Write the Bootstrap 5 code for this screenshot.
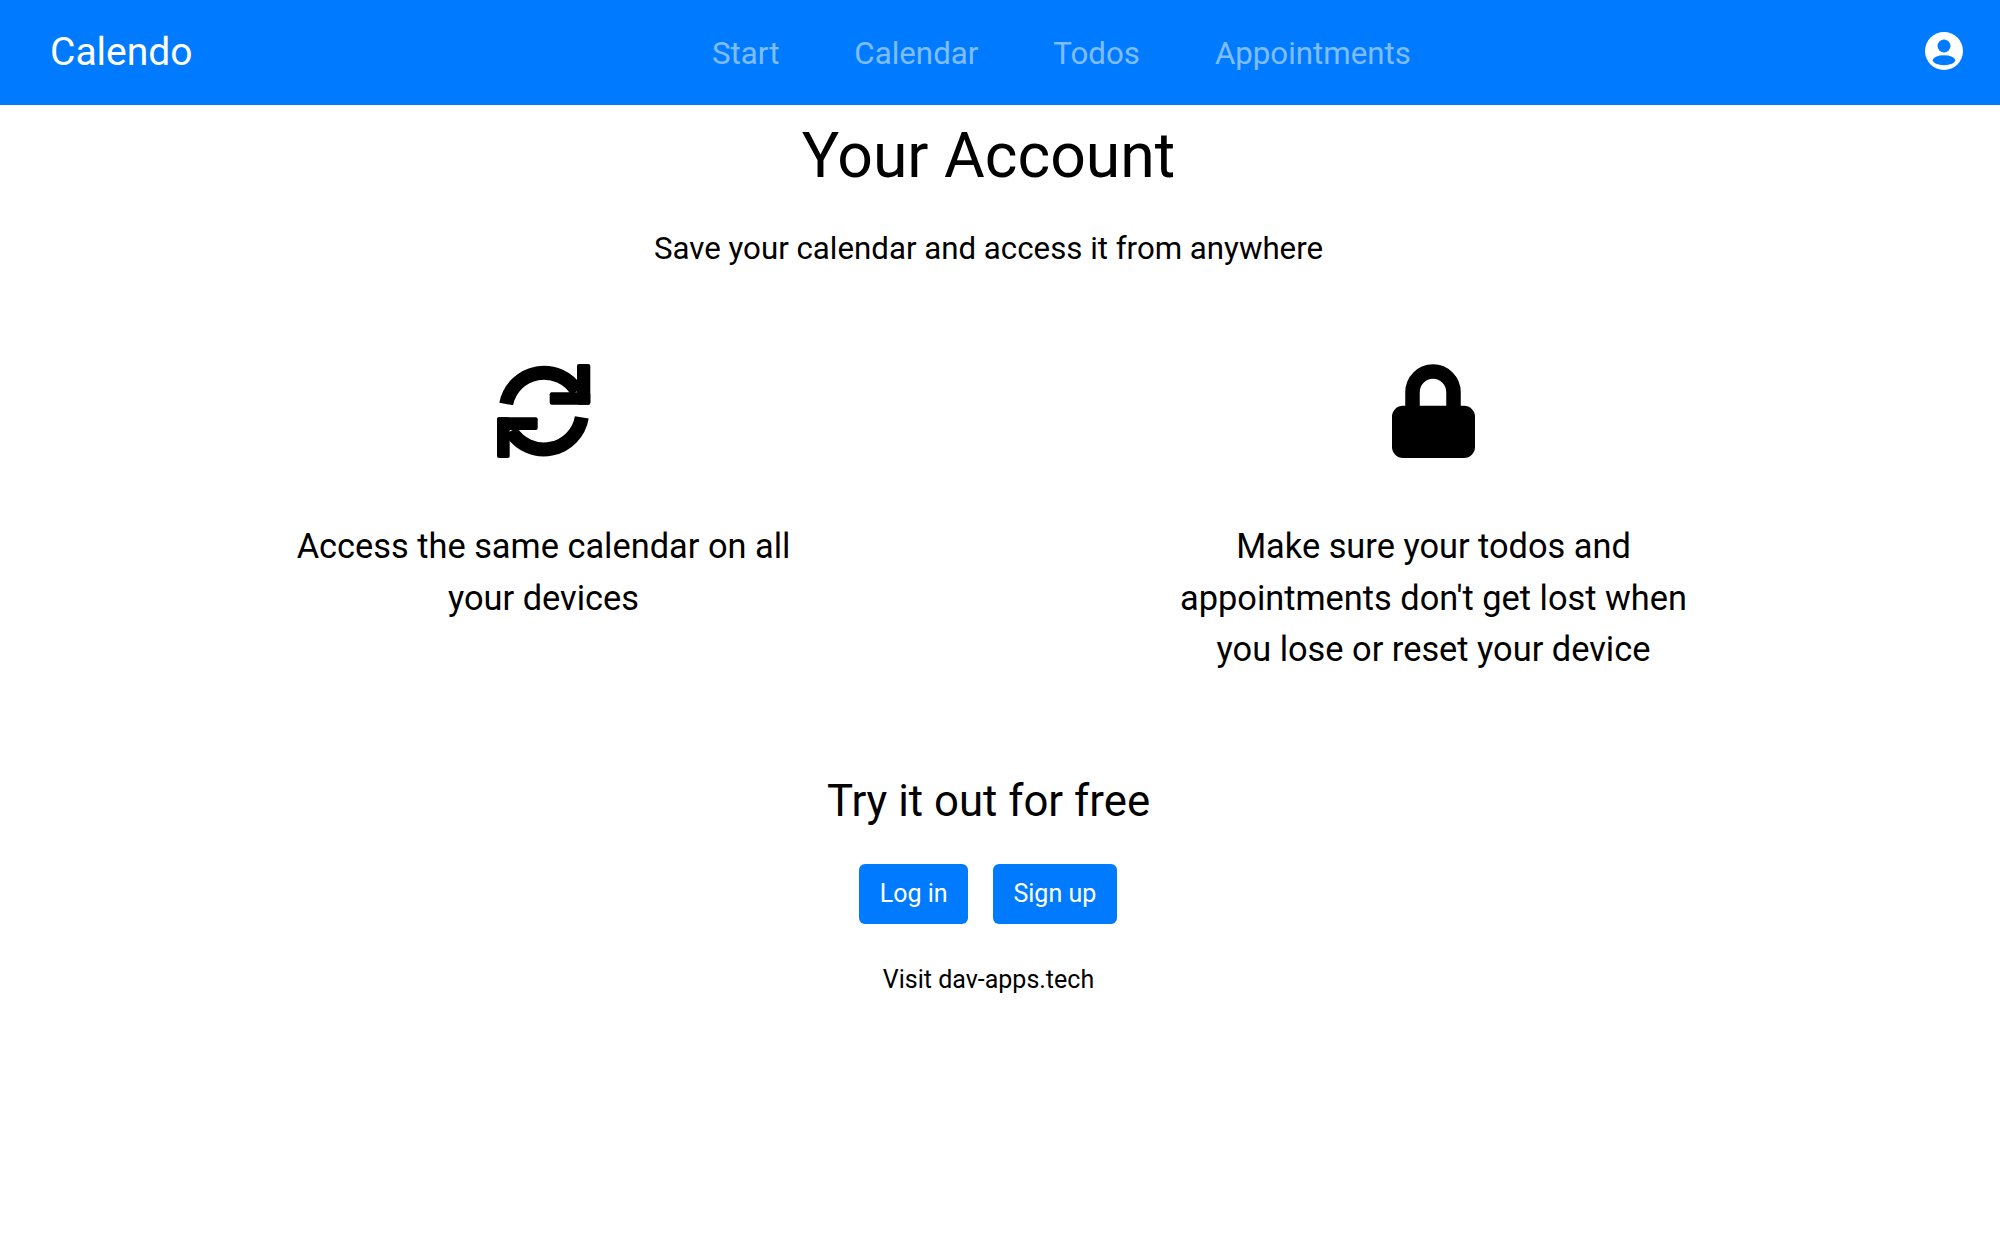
<!DOCTYPE html>
<html lang="en">
<head>
  <meta charset="UTF-8">
  <meta name="viewport" content="width=device-width, initial-scale=1.0">
  <title>Calendo</title>
  <link rel="stylesheet" href="https://cdn.jsdelivr.net/npm/bootstrap@5.3.3/dist/css/bootstrap.min.css">
  <style>
    body { font-family: Roboto, "Liberation Sans", sans-serif; color: #000; background: #fff; }
    .top-bar { background: #007bff; height: 105px; padding: 0 37px 0 50px; }
    .top-bar .navbar-brand { color: #fff; font-size: 39px; padding: 0; margin: 0; line-height: 1; }
    .top-links { position: absolute; left: 712px; top: 2px; height: 104px; gap: 75px; }
    .top-links a { color: rgba(255,255,255,.5); font-size: 31.25px; padding: 0; text-decoration: none; }
    .avatar-link { margin-bottom: 4px; line-height: 0; }
    .page-body { width: 1977px; }
    .page-title { font-size: 62.5px; font-weight: 400; line-height: 1.2; margin: 13px 0 0; }
    .page-sub { font-size: 31.25px; line-height: 1.5; margin: 32.8px 0 0; }
    .perks { width: 1780px; margin: 91.2px auto 0; }
    .perk-text { font-size: 34.375px; line-height: 51.5px; width: 540px; margin: 63.3px auto 0; }
    .perk-icon { height: 94px; display: block; margin: 0 auto; }
    .try-title { font-size: 43.75px; font-weight: 400; line-height: 1.2; margin: 99.5px 0 0; }
    .btn-row { gap: 25px; margin-top: 36px; padding-right: 1px; }
    .btn-act { background: #007bff; color: #fff; font-size: 25px; height: 60px; padding: 0 20.4px; border: 0; border-radius: 6px; line-height: 60px; }
    .visit-line { font-size: 25px; line-height: 1.5; margin: 37px 0 0; }
  </style>
</head>
<body>
  <nav class="navbar top-bar d-flex justify-content-between align-items-center position-relative">
    <a class="navbar-brand" href="#">Calendo</a>
    <div class="top-links d-flex align-items-center">
      <a href="#">Start</a>
      <a href="#">Calendar</a>
      <a href="#">Todos</a>
      <a href="#">Appointments</a>
    </div>
    <a class="avatar-link" href="#">
      <svg width="38" height="38" viewBox="0 0 38 38"><circle cx="19" cy="19" r="19" fill="#fff"/><circle cx="19" cy="14" r="6.5" fill="#007bff"/><ellipse cx="19" cy="28.3" rx="11.2" ry="5" fill="#007bff"/></svg>
    </a>
  </nav>
  <main class="page-body text-center">
    <h1 class="page-title">Your Account</h1>
    <p class="page-sub">Save your calendar and access it from anywhere</p>
    <div class="row g-0 perks">
      <div class="col-6">
        <svg class="perk-icon" width="94" viewBox="0 0 94 94">
          <path d="M9.2 40A38.5 38.5 0 0 1 80 27.4M84.8 53.3A38.5 38.5 0 0 1 14 67" fill="none" stroke="#000" stroke-width="14"/>
          <rect x="80" y="0" width="13.3" height="40.7" rx="2"/>
          <rect x="52.7" y="28.3" width="40.6" height="12.4" rx="2"/>
          <rect x="0" y="53.3" width="40.7" height="12.7" rx="2"/>
          <rect x="0" y="53.3" width="12.7" height="40.7" rx="2"/>
        </svg>
        <p class="perk-text">Access the same calendar on all your devices</p>
      </div>
      <div class="col-6">
        <svg class="perk-icon" width="83" viewBox="0 0 83 94">
          <path d="M20.5 44V28a20.5 20.5 0 0 1 41 0V44" fill="none" stroke="#000" stroke-width="14.5"/>
          <rect y="41.7" width="83" height="52.3" rx="11"/>
        </svg>
        <p class="perk-text">Make sure your todos and appointments don't get lost when you lose or reset your device</p>
      </div>
    </div>
    <h2 class="try-title">Try it out for free</h2>
    <div class="d-flex justify-content-center btn-row">
      <a href="#" class="btn btn-act">Log in</a>
      <a href="#" class="btn btn-act">Sign up</a>
    </div>
    <p class="visit-line">Visit dav-apps.tech</p>
  </main>
  <script src="https://cdn.jsdelivr.net/npm/bootstrap@5.3.3/dist/js/bootstrap.bundle.min.js"></script>
</body>
</html>
